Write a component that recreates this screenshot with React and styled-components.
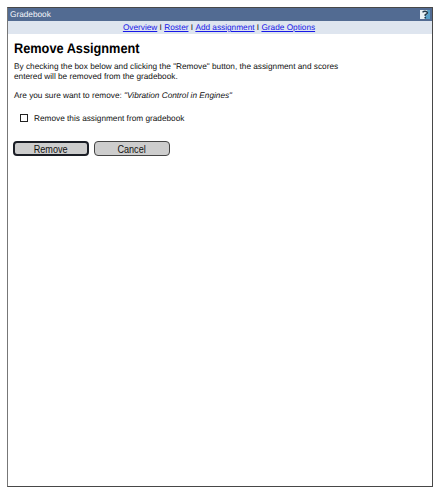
import React from "react";
import styled, { createGlobalStyle } from "styled-components";

const GlobalStyle = createGlobalStyle`
  * { box-sizing: border-box; }
  body {
    margin: 0;
    background: #fff;
    font-family: "Liberation Sans", Arial, sans-serif;
    text-rendering: geometricPrecision;
  }
`;

const Panel = styled.main`
  width: 426px;
  height: 480px;
  margin: 7px 0 0 7px;
  border: 1px solid #484848;
  border-left-color: #777;
  background: #fff;
  color: #111;
`;

const TitleBar = styled.header`
  display: flex;
  align-items: center;
  justify-content: space-between;
  height: 13px;
  padding: 0 2px 0 2px;
  background: #526b92;
  color: #f4f6fa;
  font-size: 8.25px;
  line-height: 13px;
`;

const HelpIcon = styled.svg`
  display: block;
  width: 10px;
  height: 11px;
`;

const Nav = styled.nav`
  display: flex;
  justify-content: center;
  height: 13px;
  padding-right: 2px;
  background: #dee5ef;
  font-size: 8.25px;
  line-height: 13px;
  white-space: pre;
`;

const NavLink = styled.a`
  color: #1818e8;
  text-decoration: underline;
`;

const Content = styled.section`
  padding: 6px 5px 0;
`;

const Heading = styled.h1`
  width: max-content;
  margin: 0 0 0 1px;
  font-size: 14px;
  line-height: 17px;
  font-weight: 700;
  color: #000;
  white-space: nowrap;
  transform: scaleX(0.91);
  transform-origin: left center;
`;

const Copy = styled.p`
  margin: ${(p) => p.$top}px 0 0 1px;
  font-size: 8.25px;
  line-height: 10px;
  white-space: nowrap;
`;

const CheckRow = styled.label`
  display: flex;
  align-items: center;
  gap: 6px;
  height: 10px;
  margin: 12px 0 0 7px;
  font-size: 8.25px;
`;

const Checkbox = styled.input`
  appearance: none;
  width: 8px;
  height: 8px;
  margin: 0;
  border: 1px solid #222;
  background: #fff;
`;

const Actions = styled.div`
  display: flex;
  gap: 5px;
  margin-top: 18px;
`;

const Button = styled.button`
  display: flex;
  align-items: center;
  justify-content: center;
  width: 76px;
  height: 15px;
  padding: 1px 1px 0 0;
  border: ${(p) => (p.$primary ? "2px solid #1b1e26" : "1px solid #444")};
  border-radius: 4px;
  background: #cdcdcd;
  color: #111;
  font: 10px/11px "Liberation Sans", Arial, sans-serif;
`;

const ButtonLabel = styled.span`
  transform: scaleX(0.91);
`;

const links = ["Overview", "Roster", "Add assignment", "Grade Options"];

export default function App() {
  return (
    <>
      <GlobalStyle />
      <Panel>
        <TitleBar>
          <span>Gradebook</span>
          <HelpIcon viewBox="0 0 10 11" aria-label="Help">
            <path d="M0 1h10v9H0z" fill="#e8f1f5" />
            <path d="M7 1h3v9H5V7l3-2z" fill="#569fc8" />
            <path d="M2.5 3.2Q5 1.2 7.4 3.2Q7.8 4.8 5.2 5.7V7" fill="none" stroke="#203a4b" strokeWidth="1.4" />
            <path d="M4.4 8h1.7v1.4H4.4z" fill="#203a4b" />
          </HelpIcon>
        </TitleBar>
        <Nav>
          {links.map((label, i) => (
            <React.Fragment key={label}>
              {i > 0 && <span> I </span>}
              <NavLink href="#">{label}</NavLink>
            </React.Fragment>
          ))}
        </Nav>
        <Content>
          <Heading>Remove Assignment</Heading>
          <Copy $top={5}>
            By checking the box below and clicking the "Remove" button, the assignment and scores
            <br />
            entered will be removed from the gradebook.
          </Copy>
          <Copy $top={9}>
            Are you sure want to remove: <em>"Vibration Control in Engines"</em>
          </Copy>
          <CheckRow>
            <Checkbox type="checkbox" />
            <span>Remove this assignment from gradebook</span>
          </CheckRow>
          <Actions>
            <Button $primary><ButtonLabel>Remove</ButtonLabel></Button>
            <Button><ButtonLabel>Cancel</ButtonLabel></Button>
          </Actions>
        </Content>
      </Panel>
    </>
  );
}
